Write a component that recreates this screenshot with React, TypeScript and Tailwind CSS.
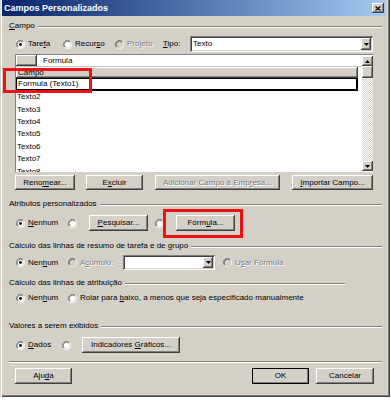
import React from "react";

const RAISED =
  "bg-[#d4d0c8] shadow-[inset_-1px_-1px_0_#404040,inset_1px_1px_0_#ffffff,inset_-2px_-2px_0_#808080,inset_2px_2px_0_#d4d0c8]";
const SUNKEN =
  "shadow-[inset_1px_1px_0_#808080,inset_-1px_-1px_0_#ffffff,inset_2px_2px_0_#404040,inset_-2px_-2px_0_#d4d0c8]";
const DIS = "text-[#808080] [text-shadow:1px_1px_0_#ffffff]";

function Radio({ checked = false, disabled = false }: { checked?: boolean; disabled?: boolean }) {
  return (
    <svg width="9" height="9" viewBox="0 0 12 12" className="shrink-0">
      <circle cx="6" cy="6" r="5.5" fill={disabled ? "#d4d0c8" : "#ffffff"} />
      <path d="M2.1 9.9 A5.5 5.5 0 0 1 9.9 2.1" stroke="#808080" strokeWidth="1" fill="none" />
      <path d="M9.9 2.1 A5.5 5.5 0 0 1 2.1 9.9" stroke="#ffffff" strokeWidth="1" fill="none" />
      <path d="M2.8 9.2 A4.5 4.5 0 0 1 9.2 2.8" stroke="#404040" strokeWidth="1" fill="none" />
      <path d="M9.2 2.8 A4.5 4.5 0 0 1 2.8 9.2" stroke="#d4d0c8" strokeWidth="1" fill="none" />
      {checked && <circle cx="6" cy="6" r="1.9" fill="#000000" />}
    </svg>
  );
}

function Btn({
  children,
  w,
  disabled = false,
  def = false,
}: {
  children: React.ReactNode;
  w: string;
  disabled?: boolean;
  def?: boolean;
}) {
  return (
    <div
      className={`${w} h-full flex items-center justify-center shrink-0 ${RAISED} ${
        def ? "outline outline-1 outline-black -outline-offset-1" : ""
      } ${disabled ? DIS : "text-black"}`}
    >
      <span className="leading-[10px]">{children}</span>
    </div>
  );
}

function DownArrow() {
  return (
    <svg width="5" height="3" viewBox="0 0 5 3">
      <path d="M0 0 H5 L2.5 3 Z" fill="#000" />
    </svg>
  );
}

function UpArrow() {
  return (
    <svg width="5" height="3" viewBox="0 0 5 3">
      <path d="M0 3 H5 L2.5 0 Z" fill="#000" />
    </svg>
  );
}

function GroupLabel({ children, pr = "pr-[8px]" }: { children: React.ReactNode; pr?: string }) {
  return (
    <div className={`flex items-center h-[10px] pl-[9px] ${pr}`}>
      <span className="leading-[10px] whitespace-nowrap">{children}</span>
      <div className="ml-[3px] flex-1 h-[2px] border-t border-t-[#808080] border-b border-b-white mt-[1px]" />
    </div>
  );
}

export default function App() {
  const rows = ["Texto2", "Texto3", "Texto4", "Texto5", "Texto6", "Texto7", "Texto8"];
  return (
    <div className="w-[391px] h-[400px] bg-white overflow-hidden font-['Liberation_Sans',Arial,sans-serif] text-[8px] text-black">
      <div className="relative w-[390px] h-[397px] bg-[#d4d0c8] shadow-[inset_1px_0_0_#d4d0c8,inset_2px_0_0_#ffffff,inset_-1px_-1px_0_#404040,inset_-2px_-2px_0_#808080] flex flex-col">
        {/* Title bar */}
        <div className="mx-[2px] mr-[4px] h-[16px] bg-linear-to-r from-[#0a246a] to-[#a6caf0] flex items-center justify-between pl-[2px] pr-[2px]">
          <span className="text-white font-bold text-[9px] leading-[10px]">Campos Personalizados</span>
          <div className={`w-[12px] h-[10px] flex items-center justify-center ${RAISED}`}>
            <svg width="6" height="5" viewBox="0 0 6 5">
              <path d="M0.5 0.5 L5.5 4.5 M5.5 0.5 L0.5 4.5" stroke="#000" strokeWidth="1.2" />
            </svg>
          </div>
        </div>

        {/* Campo group */}
        <div className="mt-[5px]">
          <GroupLabel>
            <u>C</u>ampo
          </GroupLabel>
        </div>

        <div className="mt-[5px] h-[16px] flex items-center pl-[16px]">
          <div className="w-[47px] flex items-center gap-[3px]">
            <Radio checked />
            <span>
              Tare<u>f</u>a
            </span>
          </div>
          <div className="w-[52px] flex items-center gap-[3px]">
            <Radio />
            <span>
              Recur<u>s</u>o
            </span>
          </div>
          <div className="w-[48px] flex items-center gap-[3px]">
            <Radio disabled />
            <span className={DIS}>
              Pro<u>j</u>eto
            </span>
          </div>
          <span className="w-[27px]">
            <u>T</u>ipo:
          </span>
          <div className={`w-[183px] h-[16px] bg-white flex items-center ${SUNKEN} pl-[3px] pr-[2px]`}>
            <span className="flex-1">Texto</span>
            <div className={`w-[10px] h-[12px] flex items-center justify-center ${RAISED}`}>
              <DownArrow />
            </div>
          </div>
        </div>

        {/* List / grid */}
        <div className="mt-[2px] ml-[15px] w-[358px] h-[118px] flex border-t border-l border-t-[#808080] border-l-[#808080] bg-white">
          <div className="flex-1 flex flex-col overflow-hidden">
            <div className="h-[12px] flex border-b border-b-[#c0c0c0]">
              <div className={`w-[21px] h-full ${RAISED}`} />
              <div className="flex-1 bg-white flex items-center pl-[6px]">
                <span>Formula</span>
              </div>
            </div>
            <div className={`w-[342px] h-[11px] flex items-center pl-[2px] ${RAISED}`}>
              <span>Campo</span>
            </div>
            <div className="w-[342px] h-[13px] flex items-center pl-[1px] border border-black border-b-2 border-r-2 shrink-0">
              <span>Formula (Texto1)</span>
            </div>
            {rows.map((r) => (
              <div key={r} className="h-[12.4px] shrink-0 flex items-center pl-[1px]">
                <span>{r}</span>
              </div>
            ))}
          </div>
          <div className="w-[11px] h-full flex flex-col pt-[1px] pb-[1px]">
            <div className={`h-[10px] flex items-center justify-center ${RAISED}`}>
              <UpArrow />
            </div>
            <div className={`h-[12px] ${RAISED}`} />
            <div className="flex-1 bg-[repeating-conic-gradient(#d4d0c8_0_25%,#ffffff_0_50%)] bg-[length:2px_2px]" />
            <div className={`h-[10px] flex items-center justify-center ${RAISED}`}>
              <DownArrow />
            </div>
          </div>
        </div>

        <div className="mt-[3px] h-[15px] flex pl-[15px]">
          <Btn w="w-[60px]">
            Reno<u>m</u>ear...
          </Btn>
          <div className="w-[11px]" />
          <Btn w="w-[57px]">
            E<u>x</u>cluir
          </Btn>
          <div className="w-[12px]" />
          <Btn w="w-[125px]" disabled>
            Adicionar Campo à Emp<u>r</u>esa...
          </Btn>
          <div className="w-[12px]" />
          <Btn w="w-[81px]">
            <u>I</u>mportar Campo...
          </Btn>
        </div>

        {/* Atributos personalizados */}
        <div className="mt-[9px]">
          <GroupLabel>Atributos personalizados</GroupLabel>
        </div>
        <div className="mt-[6px] h-[16px] flex items-center pl-[16px]">
          <div className="w-[52px] flex items-center gap-[3px]">
            <Radio checked />
            <span>
              <u>N</u>enhum
            </span>
          </div>
          <div className="w-[21px] flex items-center">
            <Radio />
          </div>
          <Btn w="w-[59px]">
            <u>P</u>esquisar...
          </Btn>
          <div className="w-[7px]" />
          <div className="w-[21px] flex items-center">
            <Radio />
          </div>
          <Btn w="w-[59px]">
            Fórm<u>u</u>la...
          </Btn>
        </div>

        {/* Cálculo das linhas de resumo */}
        <div className="mt-[10px]">
          <GroupLabel>Cálculo das linhas de resumo de tarefa e de grupo</GroupLabel>
        </div>
        <div className="mt-[4px] h-[15px] flex items-center pl-[16px]">
          <div className="w-[52px] flex items-center gap-[3px]">
            <Radio checked />
            <span>
              Nen<u>h</u>um
            </span>
          </div>
          <div className="w-[55px] flex items-center gap-[3px]">
            <Radio disabled />
            <span className={DIS}>
              A<u>c</u>úmulo:
            </span>
          </div>
          <div className={`w-[92px] h-[15px] bg-white flex items-center justify-end ${SUNKEN} pr-[2px]`}>
            <div className={`w-[10px] h-[11px] flex items-center justify-center ${RAISED}`}>
              <DownArrow />
            </div>
          </div>
          <div className="w-[8px]" />
          <div className="flex items-center gap-[3px]">
            <Radio disabled />
            <span className={DIS}>
              U<u>s</u>ar Fórmula
            </span>
          </div>
        </div>

        {/* Cálculo das linhas de atribuição */}
        <div className="mt-[8px]">
          <GroupLabel pr="pr-[45px]">Cálculo das linhas de atribuição</GroupLabel>
        </div>
        <div className="mt-[3px] h-[14px] flex items-center pl-[16px]">
          <div className="w-[52px] flex items-center gap-[3px]">
            <Radio checked />
            <span>
              Nen<u>h</u>um
            </span>
          </div>
          <div className="flex items-center gap-[3px]">
            <Radio />
            <span>
              Rolar para <u>b</u>aixo, a menos que seja especificado manualmente
            </span>
          </div>
        </div>

        {/* Valores a serem exibidos */}
        <div className="mt-[16px]">
          <GroupLabel>Valores a serem exibidos</GroupLabel>
        </div>
        <div className="mt-[6px] h-[16px] flex items-center pl-[16px]">
          <div className="w-[46px] flex items-center gap-[3px]">
            <Radio checked />
            <span>
              <u>D</u>ados
            </span>
          </div>
          <div className="w-[20px] flex items-center">
            <Radio />
          </div>
          <Btn w="w-[98px]">
            Indicadores <u>G</u>ráficos...
          </Btn>
        </div>

        {/* separator */}
        <div className="mt-[8px] ml-[9px] mr-[8px] h-[2px] border-t border-t-[#808080] border-b border-b-white" />

        <div className="mt-[5px] h-[16px] flex pl-[15px]">
          <Btn w="w-[57px]">
            Aju<u>d</u>a
          </Btn>
          <div className="w-[180px]" />
          <Btn w="w-[57px]" def>
            OK
          </Btn>
          <div className="w-[7px]" />
          <Btn w="w-[58px]">Cancelar</Btn>
        </div>

        {/* red annotation boxes */}
        <div className="absolute left-[3px] top-[68px] w-[89px] h-[25px] border-[3px] border-[#ee1111]" />
        <div className="absolute left-[163px] top-[209px] w-[80px] h-[29px] border-[3px] border-[#ee1111]" />
      </div>
    </div>
  );
}
